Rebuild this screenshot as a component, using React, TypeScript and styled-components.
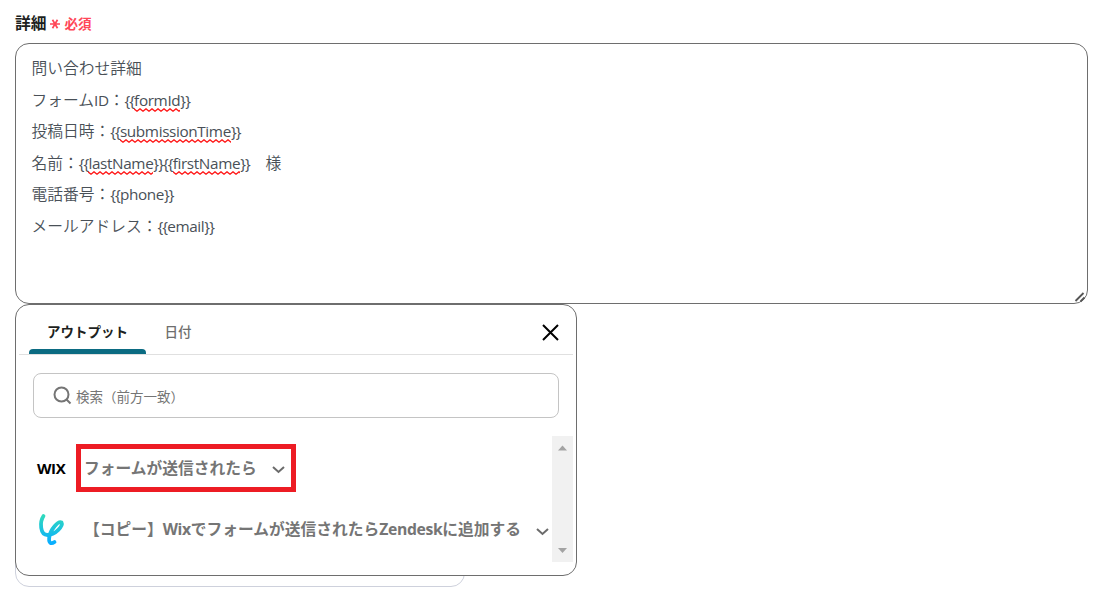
import type { ReactNode } from "react";
import styled, { createGlobalStyle } from "styled-components";

const GlobalStyle = createGlobalStyle`
  * {
    box-sizing: border-box;
  }
  body {
    margin: 0;
    background: #fff;
    font-family: "Open Sans", "Noto Sans CJK JP", sans-serif;
  }
`;

const Page = styled.main`
  width: 1102px;
  height: 598px;
  padding: 11px 14px 0 15px;
  overflow: hidden;
`;

const FieldLabel = styled.div`
  display: flex;
  align-items: center;
  height: 22px;
  font-family: "Noto Sans CJK JP", sans-serif;
  font-size: 15.75px;
  font-weight: 700;
  color: #1d1f21;
`;

const Required = styled.span`
  display: flex;
  align-items: center;
  gap: 3px;
  margin: 2px 0 0 3px;
  font-size: 13.5px;
  color: #ff4757;
`;

const Asterisk = styled.svg`
  margin: 2px 1px 0 -1px;
`;

const TextBox = styled.div`
  position: relative;
  width: 1073px;
  height: 261px;
  margin-top: 10px;
  padding: 8px 15px 8px 15.5px;
  border: 1px solid #6e6e6e;
  border-radius: 14px;
  color: #495057;
`;

const Line = styled.div`
  height: 31.5px;
  font-family: "Noto Sans CJK JP", sans-serif;
  font-size: 15.75px;
  font-weight: 350;
  line-height: 31.5px;
  white-space: pre;
`;

const Latin = styled.span<{ $track?: number }>`
  font-family: "Open Sans", sans-serif;
  font-weight: 400;
  font-size: 15.3px;
  letter-spacing: ${({ $track = -0.37 }) => $track}px;
`;

const Misspelled = styled(Latin)`
  padding-bottom: 2px;
  background: url("data:image/svg+xml,%3Csvg xmlns='http://www.w3.org/2000/svg' width='6' height='4'%3E%3Cpath d='M-1 0 0 .8 3 3.200 6 .8 7 0' fill='none' stroke='%23ff1a1a' stroke-width='1.300'/%3E%3C/svg%3E")
    repeat-x left bottom / 6px 4px;
`;

const ResizeGrip = styled.svg`
  position: absolute;
  right: 1px;
  bottom: 0;
`;

const PanelArea = styled.div`
  position: relative;
  width: 562px;
  height: 283px;
`;

const CardBehind = styled.div`
  position: absolute;
  left: 0;
  bottom: 0;
  width: 450px;
  height: 60px;
  border: 1px solid #ced1dc;
  border-radius: 14px;
`;

const Panel = styled.section`
  position: relative;
  height: 272px;
  padding: 0 3px;
  border: 1px solid #6e6e6e;
  border-radius: 14px;
  background: #fff;
`;

const TabBar = styled.div`
  display: flex;
  height: 50px;
  padding-left: 10px;
  border-bottom: 1px solid #e0e0e0;
`;

const Tab = styled.div<{ $active?: boolean }>`
  display: flex;
  flex-direction: column;
  align-items: center;
  justify-content: space-between;
  width: ${({ $active }) => ($active ? "117px" : "64px")};
  height: 49px;
  padding-top: 16px;
  font-family: "Noto Sans CJK JP", sans-serif;
  font-size: 13.5px;
  font-weight: ${({ $active }) => ($active ? 700 : 500)};
  line-height: 20px;
  color: ${({ $active }) => ($active ? "#1d1f21" : "#6e6e6e")};
`;

const TabMarker = styled.div`
  width: 100%;
  height: 5px;
  border-radius: 4px 4px 0 0;
  background: #0b6b82;
`;

const CloseIcon = styled.svg`
  margin: 19px 14px 0 auto;
`;

const SearchBox = styled.div`
  display: flex;
  align-items: center;
  gap: 4px;
  width: 526px;
  height: 45px;
  margin: 18px 0 0 14px;
  padding-left: 19px;
  border: 1px solid #c4c4c4;
  border-radius: 8px;
  font-family: "Noto Sans CJK JP", sans-serif;
  font-size: 13.5px;
  line-height: 20px;
  color: #757575;
`;

const ListArea = styled.div`
  display: flex;
  justify-content: space-between;
  height: 126px;
  margin-top: 18px;
`;

const List = styled.div`
  padding-top: 8px;
`;

const Item = styled.div`
  display: flex;
  align-items: center;
  height: 48px;
  margin-bottom: 14px;
  padding-left: 17px;
`;

const ServiceIcon = styled.div`
  width: 40px;
  height: 34px;
  padding-left: 2px;
`;

const WixWord = styled.div`
  width: 40px;
  padding: 0 0 1px 1px;
  font-family: "Open Sans", sans-serif;
  font-size: 15px;
  font-weight: 700;
  letter-spacing: -0.4px;
  color: #000;
`;

const ItemButton = styled.div<{ $marked?: boolean }>`
  display: flex;
  align-items: center;
  gap: 15px;
  height: 48px;
  padding: 0 6px 0 3px;
  border: 5px solid ${({ $marked }) => ($marked ? "#ed1c24" : "transparent")};
  color: #757575;
`;

const ItemTitle = styled.span<{ $lift?: number }>`
  padding-bottom: ${({ $lift = 1 }) => $lift}px;
  font-family: "Noto Sans CJK JP", sans-serif;
  font-size: 15.75px;
  font-weight: 700;
  line-height: 24px;
  white-space: nowrap;
`;

const BoldLatin = styled.span`
  font-family: "Open Sans", sans-serif;
  letter-spacing: -0.38px;
`;

const ScrollTrack = styled.div`
  display: flex;
  flex-direction: column;
  flex-shrink: 0;
  align-items: center;
  justify-content: space-between;
  width: 21px;
  margin-left: -30px;
  padding: 9px 0 8px;
  background: #f1f1f1;
`;

const ChevronIcon = styled.svg`
  margin-top: 3px;
`;

const Chevron = () => (
  <ChevronIcon width="13" height="9" viewBox="0 0 13 9">
    <path d="M1 2l5.500 5L12 2" fill="none" stroke="#6b6b6b" strokeWidth="2" />
  </ChevronIcon>
);

const Arrow = ({ down }: { down?: boolean }) => (
  <svg width="9" height="6" viewBox="0 0 9 6">
    <path d={down ? "M0 0h9L4.500 5z" : "M0 5.500h9L4.500 .5z"} fill="#a3a3a3" />
  </svg>
);

const Brace = ({ children }: { children: ReactNode }) => (
  <Latin $track={-0.9}>{children}</Latin>
);

export default function App() {
  return (
    <>
      <GlobalStyle />
      <Page>
        <FieldLabel>
          詳細
          <Required>
            <Asterisk width="12" height="12" viewBox="0 0 12 12">
              <path d="M1 6h10M3.500 1.700l5 8.600M8.500 1.700l-5 8.600" stroke="#ff4757" strokeWidth="1.700" />
            </Asterisk>
            必須
          </Required>
        </FieldLabel>
        <TextBox>
          <Line>問い合わせ詳細</Line>
          <Line>
            フォーム<Latin>ID</Latin>：<Brace>{"{{"}</Brace>
            <Misspelled>formId</Misspelled>
            <Brace>{"}}"}</Brace>
          </Line>
          <Line>
            投稿日時：<Brace>{"{{"}</Brace>
            <Misspelled>submissionTime</Misspelled>
            <Brace>{"}}"}</Brace>
          </Line>
          <Line>
            名前：<Brace>{"{{"}</Brace>
            <Misspelled>lastName</Misspelled>
            <Brace>{"}}{{"}</Brace>
            <Misspelled>firstName</Misspelled>
            <Brace>{"}}"}</Brace>
            {"\u3000様"}
          </Line>
          <Line>
            電話番号：<Brace>{"{{"}</Brace>
            <Latin>phone</Latin>
            <Brace>{"}}"}</Brace>
          </Line>
          <Line>
            メールアドレス：<Brace>{"{{"}</Brace>
            <Latin>email</Latin>
            <Brace>{"}}"}</Brace>
          </Line>
          <ResizeGrip width="12" height="12" viewBox="0 0 12 12">
            <path d="M1.500 10 9.500 2M6.500 10.500 10.500 6.500" stroke="#555" strokeWidth="1.800" />
          </ResizeGrip>
        </TextBox>
        <PanelArea>
          <CardBehind />
          <Panel>
            <TabBar>
              <Tab $active>
                アウトプット
                <TabMarker />
              </Tab>
              <Tab>日付</Tab>
              <CloseIcon width="17" height="17" viewBox="0 0 17 17">
                <path d="M1 1l15 15M16 1 1 16" stroke="#000" strokeWidth="2" />
              </CloseIcon>
            </TabBar>
            <SearchBox>
              <svg width="19" height="19" viewBox="0 0 19 19" fill="none" stroke="#757575" strokeWidth="2">
                <circle cx="8.500" cy="8.500" r="7" />
                <path d="m13.500 13.500 4 4" />
              </svg>
              検索（前方一致）
            </SearchBox>
            <ListArea>
              <List>
                <Item>
                  <WixWord>WIX</WixWord>
                  <ItemButton $marked>
                    <ItemTitle>フォームが送信されたら</ItemTitle>
                    <Chevron />
                  </ItemButton>
                </Item>
                <Item>
                  <ServiceIcon>
                    <svg width="30" height="34" viewBox="0 0 30 34">
                      <defs>
                        <linearGradient id="brand" x1="0" y1="0" x2="0" y2="1">
                          <stop offset="0" stopColor="#2fd9bd" />
                          <stop offset="1" stopColor="#0aaeff" />
                        </linearGradient>
                      </defs>
                      <path
                        d="M5.500 3C1.500 9 2 22 9.500 22 17 22 25.500 13 23.500 9.500 20 7.500 12.500 17 11.500 23 10 30 13 31.500 16.500 29"
                        fill="none"
                        stroke="url(#brand)"
                        strokeWidth="3.800"
                        strokeLinecap="round"
                      />
                    </svg>
                  </ServiceIcon>
                  <ItemButton>
                    <ItemTitle $lift={3}>
                      【コピー】<BoldLatin>Wix</BoldLatin>でフォームが送信されたら
                      <BoldLatin>Zendesk</BoldLatin>に追加する
                    </ItemTitle>
                    <Chevron />
                  </ItemButton>
                </Item>
              </List>
              <ScrollTrack>
                <Arrow />
                <Arrow down />
              </ScrollTrack>
            </ListArea>
          </Panel>
        </PanelArea>
      </Page>
    </>
  );
}
